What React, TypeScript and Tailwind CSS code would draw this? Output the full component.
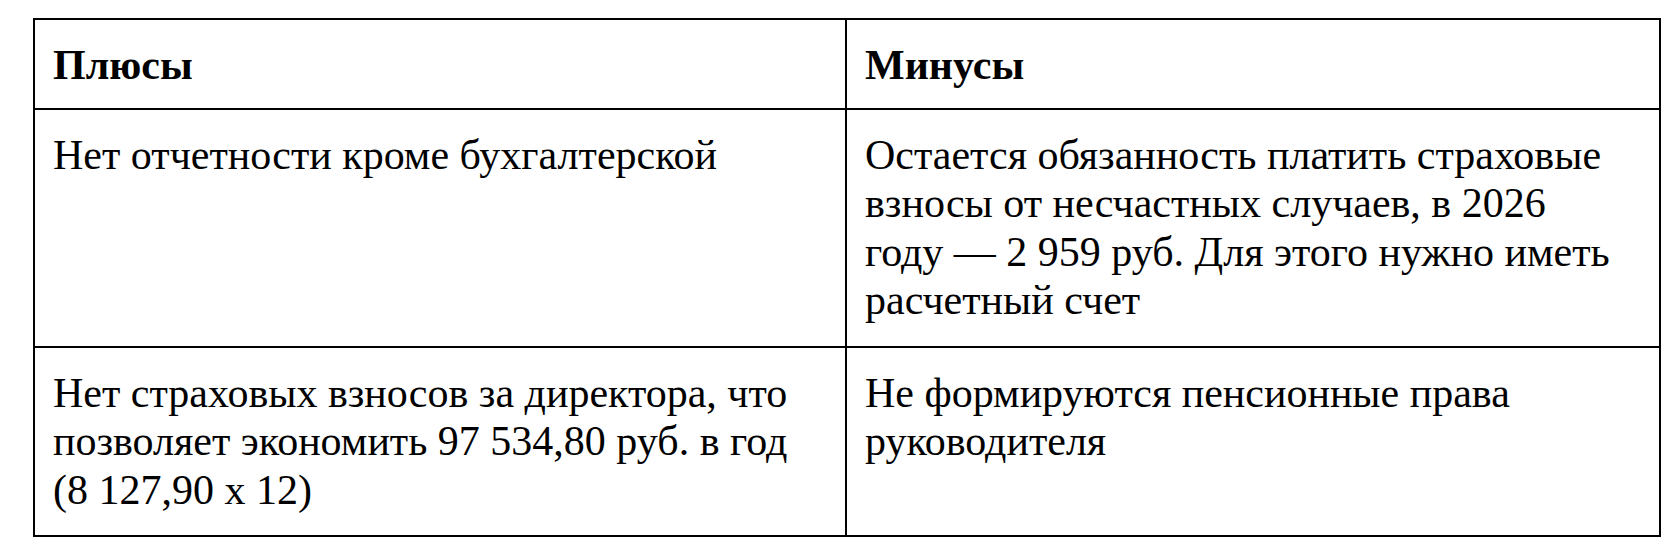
import React from "react";

function T({ children, bold }: { children: React.ReactNode; bold?: boolean }) {
  return (
    <div
      className={
        bold
          ? "origin-top-left scale-[1.16667] whitespace-nowrap font-['Liberation_Serif'] text-[36px] leading-[41.4px] font-bold"
          : "origin-top-left scale-[1.16667] whitespace-nowrap font-['Liberation_Serif'] text-[36px] leading-[41.4px] font-normal"
      }
    >
      {children}
    </div>
  );
}

export default function App() {
  const base = "px-[18px] pt-[22px] text-left overflow-visible";
  return (
    <div className="w-[1680px] h-[560px] bg-white pl-[33px] pt-[18px] text-black">
      <div className="grid w-[1628px] grid-cols-2 border-2 border-black">
        <div className={`${base} h-[90px] border-r-2 border-b-2 border-black`}>
          <T bold>Плюсы</T>
        </div>
        <div className={`${base} h-[90px] border-b-2 border-black`}>
          <T bold>Минусы</T>
        </div>

        <div className={`${base} h-[238px] border-r-2 border-b-2 border-black`}>
          <T>Нет отчетности кроме бухгалтерской</T>
        </div>
        <div className={`${base} h-[238px] border-b-2 border-black`}>
          <T>
            Остается обязанность платить страховые
            <br />
            взносы от несчастных случаев, в 2026
            <br />
            году — 2 959 руб. Для этого нужно иметь
            <br />
            расчетный счет
          </T>
        </div>

        <div className={`${base} h-[187px] border-r-2 border-black`}>
          <T>
            Нет страховых взносов за директора, что
            <br />
            позволяет экономить 97 534,80 руб. в год
            <br />
            (8 127,90 x 12)
          </T>
        </div>
        <div className={`${base} h-[187px]`}>
          <T>
            Не формируются пенсионные права
            <br />
            руководителя
          </T>
        </div>
      </div>
    </div>
  );
}
